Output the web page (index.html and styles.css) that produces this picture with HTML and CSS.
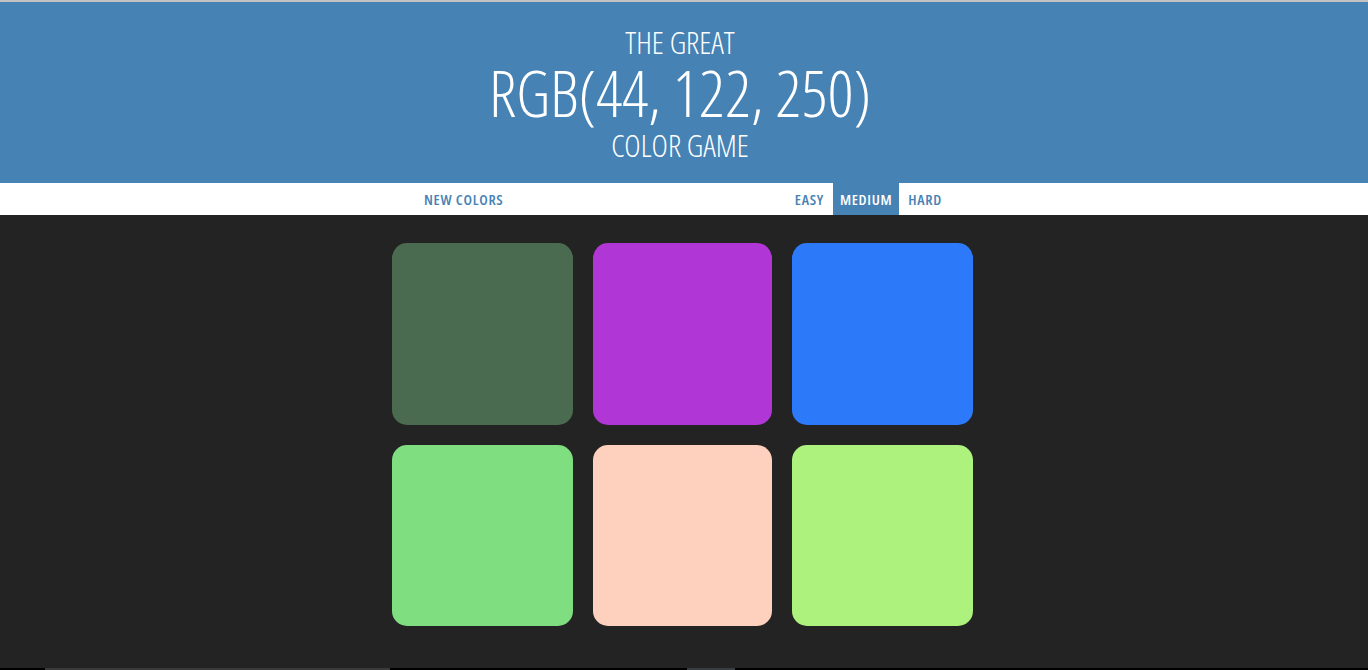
FILE: index.html
```html
<!DOCTYPE html>
<html lang="en">
<head>
<meta charset="utf-8">
<title>Color Game</title>
<link rel="stylesheet" href="styles.css">
</head>
<body>
<div class="page">
  <header class="header">
    <h1 class="title">
      <span class="title-small">THE GREAT</span>
      <span class="title-big">RGB(44, 122, 250)</span>
      <span class="title-small last">COLOR GAME</span>
    </h1>
  </header>
  <nav class="stripe">
    <div class="stripe-inner">
      <button class="btn">NEW COLORS</button>
      <span class="message"></span>
      <div class="modes">
        <button class="btn">EASY</button>
        <button class="btn selected">MEDIUM</button>
        <button class="btn">HARD</button>
      </div>
    </div>
  </nav>
  <main class="board">
    <div class="grid">
      <div class="square sq1"></div>
      <div class="square sq2"></div>
      <div class="square sq3"></div>
      <div class="square sq4"></div>
      <div class="square sq5"></div>
      <div class="square sq6"></div>
    </div>
  </main>
  <div class="bottom-bar">
    <span class="seg gap1"></span>
    <span class="seg thumb1"></span>
    <span class="seg gap2"></span>
    <span class="seg thumb2"></span>
    <span class="seg rest"></span>
  </div>
</div>
</body>
</html>
```

FILE: styles.css
```css
* { box-sizing: border-box; }
html, body { margin: 0; padding: 0; height: 100%; }
body {
  background: #232323;
  font-family: "Open Sans", "Liberation Sans Narrow", "Liberation Sans", sans-serif;
  font-stretch: condensed;
  overflow: hidden;
}
.page {
  height: 670px;
  display: flex;
  flex-direction: column;
  border-top: 2px solid #c3c3c3;
}
.header {
  background: #4682b4;
  padding: 23px 8px 19px 0;
  text-align: center;
  color: #fff;
}
.title {
  margin: 0;
  font-weight: 300;
  display: flex;
  flex-direction: column;
  align-items: center;
}
.title-small {
  font-size: 31px;
  line-height: 34px;
  font-weight: 300;
}
.title-small.last { line-height: 38px; }
.title-big {
  font-size: 64px;
  line-height: 67px;
  font-weight: 300;
}
.stripe {
  background: #fff;
  height: 32px;
  padding-right: 2px;
  display: flex;
  justify-content: center;
}
.stripe-inner {
  width: 532px;
  display: flex;
  align-items: stretch;
}
.message { flex: 1; }
.modes { display: flex; gap: 2px; }
.btn {
  border: none;
  background: none;
  font-family: inherit;
  font-stretch: condensed;
  font-size: 15px;
  font-weight: 600;
  letter-spacing: 0.7px;
  color: #4682b4;
  padding: 0 7px;
  height: 32px;
  text-transform: uppercase;
}
.btn.selected {
  background: #4682b4;
  color: #fff;
}
.board {
  flex: 1;
  padding: 28px 3px 0 0;
  display: flex;
  justify-content: center;
}
.grid {
  display: grid;
  grid-template-columns: 181px 179px 181px;
  grid-template-rows: 182px 181px;
  gap: 20px;
  align-content: start;
}
.square { border-radius: 15px; }
.sq1 { background: #4a6b4f; }
.sq2 { background: #b036d6; }
.sq3 { background: #2c7afa; }
.sq4 { background: #7ede80; }
.sq5 { background: #fed1bf; }
.sq6 { background: #aef27e; }
.bottom-bar {
  height: 2px;
  display: flex;
  background: #000;
}
.seg { display: block; height: 2px; }
.gap1 { width: 45px; }
.thumb1 { width: 345px; background: #3a3a3a; }
.gap2 { width: 297px; }
.thumb2 { width: 48px; background: #383d42; }
.rest { flex: 1; }
```
